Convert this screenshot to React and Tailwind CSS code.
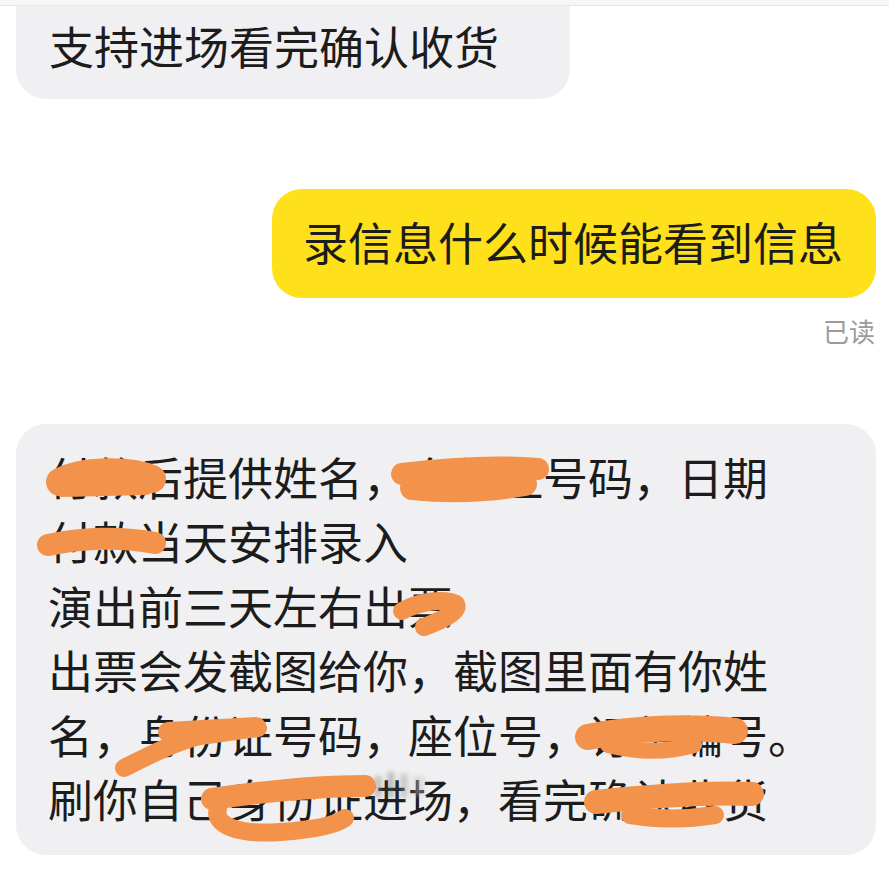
import React from 'react';

// Chat thread screenshot — gray / yellow bubbles with hand-drawn redactions
const lines = [
  '付款后提供姓名，身份证号码，日期',
  '付款当天安排录入',
  '演出前三天左右出票',
  '出票会发截图给你，截图里面有你姓',
  '名，身份证号码，座位号，订单编号。',
  '刷你自己身份证进场，看完确认收货',
];

// orange marker strokes, page coordinates
const scribbles = [
  { d: 'M60 482 C 82 470, 130 469, 152 479', w: 28 },
  { d: 'M62 489 L 146 487', w: 16 },
  { d: 'M402 474 C 450 468, 500 466, 538 469', w: 22 },
  { d: 'M412 488 C 450 492, 490 490, 525 484', w: 24 },
  { d: 'M48 545 C 80 538, 120 536, 155 543', w: 22 },
  { d: 'M402 611 C 420 601, 445 598, 456 604 C 460 612, 440 621, 424 627', w: 18 },
  { d: 'M124 768 C 150 755, 175 742, 200 736 L 258 728', w: 18 },
  { d: 'M168 732 L 256 727', w: 20 },
  { d: 'M588 737 C 630 728, 690 726, 735 731', w: 26 },
  { d: 'M608 745 C 640 753, 670 752, 694 745', w: 16 },
  { d: 'M212 799 C 260 792, 320 786, 365 786', w: 22 },
  { d: 'M218 808 C 212 826, 240 835, 280 832 C 310 830, 335 826, 345 818', w: 18 },
  { d: 'M596 802 C 650 796, 710 792, 752 794', w: 24 },
  { d: 'M630 815 C 660 820, 690 819, 715 815', w: 18 },
];

const App = () => {
  return (
    <div className="relative w-full min-h-[882px] bg-white overflow-hidden font-['Noto_Sans_CJK_SC','Noto_Sans',sans-serif] text-[#1c1c1c]">
      {/* top edge */}
      <div className="h-[6px] bg-[#f6f6f6] border-b border-[#e6e6e6]" />

      <div className="flex flex-col px-[13px] pl-[16px]">
        {/* incoming bubble, cut at top */}
        <div className="w-[554px] bg-[#f0f0f2] rounded-b-[30px] pl-[33px] pt-[8px] pb-[21px] text-[45px] leading-[64px]">
          支持进场看完确认收货
        </div>

        {/* outgoing */}
        <div className="self-end mt-[90px] bg-[#fee11b] rounded-[30px] pl-[31px] pr-[33px] pt-[21px] pb-[24px] text-[45px] leading-[64px]">
          录信息什么时候能看到信息
        </div>
        <div className="self-end mt-[18px] pr-[1px] text-[26px] leading-[30px] text-[#9b9b9b]">已读</div>

        {/* incoming long message */}
        <div className="mt-[78px] bg-[#f0f0f2] rounded-[30px] pl-[32px] pr-[20px] pt-[21px] pb-[24px] text-[45px] leading-[64.4px]">
          {lines.map((l, i) => (
            <div key={i} className="whitespace-nowrap">{l}</div>
          ))}
        </div>
      </div>

      {/* redaction overlay */}
      <svg className="absolute left-0 top-0 pointer-events-none" width="889" height="882" viewBox="0 0 889 882">
        <defs>
          <filter id="mosaic" x="-20%" y="-20%" width="140%" height="140%">
            <feGaussianBlur stdDeviation="2.5" />
          </filter>
        </defs>
        <g filter="url(#mosaic)" opacity="0.45">
          <rect x="374" y="776" width="8" height="22" fill="#8a8a8a" />
          <rect x="388" y="772" width="6" height="26" fill="#6f6f6f" />
          <rect x="400" y="774" width="8" height="24" fill="#9a9a9a" />
          <rect x="414" y="776" width="10" height="20" fill="#bdbdbd" />
        </g>
        {scribbles.map((s, i) => (
          <path
            key={i}
            d={s.d}
            fill="none"
            stroke="#f3934b"
            strokeWidth={s.w}
            strokeLinecap="round"
            strokeLinejoin="round"
          />
        ))}
      </svg>
    </div>
  );
};

export default App;
